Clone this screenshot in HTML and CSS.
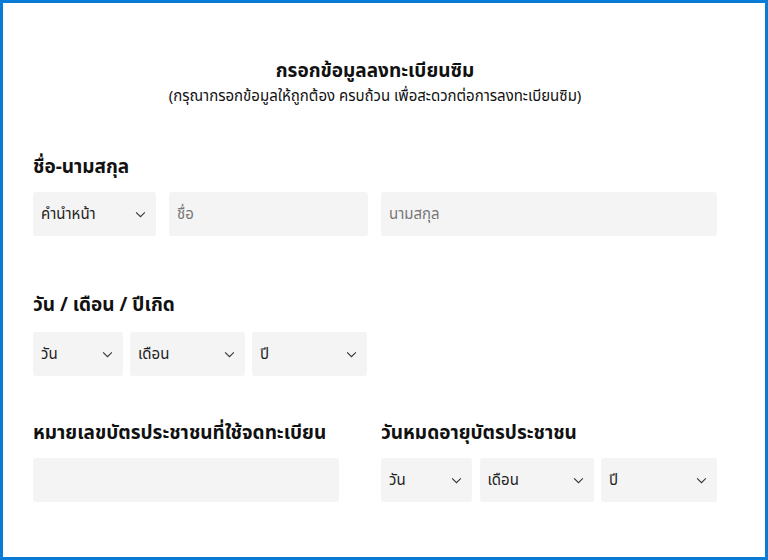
FILE: index.html
```html
<!DOCTYPE html>
<html lang="th">
<head>
<meta charset="utf-8">
<link rel="stylesheet" href="styles.css">
</head>
<body>
<div class="frame">
  <header class="head">
    <h1 class="title">กรอกข้อมูลลงทะเบียนซิม</h1>
    <p class="subtitle">(กรุณากรอกข้อมูลให้ถูกต้อง ครบถ้วน เพื่อสะดวกต่อการลงทะเบียนซิม)</p>
  </header>

  <section class="sec sec-name">
    <h2 class="label">ชื่อ-นามสกุล</h2>
    <div class="grid2">
      <div class="row">
        <div class="field sel w-prefix"><span>คำนำหน้า</span><svg class="chev" viewBox="0 0 12 8"><path d="M1 1.5l5 5 5-5" fill="none" stroke="#333" stroke-width="1.2"/></svg></div>
        <div class="field input grow"><span class="ph">ชื่อ</span></div>
      </div>
      <div class="field input"><span class="ph">นามสกุล</span></div>
    </div>
  </section>

  <section class="sec sec-birth">
    <h2 class="label">วัน / เดือน / ปีเกิด</h2>
    <div class="grid2">
      <div class="dates">
        <div class="field sel"><span>วัน</span><svg class="chev" viewBox="0 0 12 8"><path d="M1 1.5l5 5 5-5" fill="none" stroke="#333" stroke-width="1.2"/></svg></div>
        <div class="field sel"><span>เดือน</span><svg class="chev" viewBox="0 0 12 8"><path d="M1 1.5l5 5 5-5" fill="none" stroke="#333" stroke-width="1.2"/></svg></div>
        <div class="field sel"><span>ปี</span><svg class="chev" viewBox="0 0 12 8"><path d="M1 1.5l5 5 5-5" fill="none" stroke="#333" stroke-width="1.2"/></svg></div>
      </div>
    </div>
  </section>

  <section class="grid2 sec-id">
    <div class="col">
      <h2 class="label">หมายเลขบัตรประชาชนที่ใช้จดทะเบียน</h2>
      <div class="field input w-id"></div>
    </div>
    <div class="col">
      <h2 class="label">วันหมดอายุบัตรประชาชน</h2>
      <div class="dates dates-r">
        <div class="field sel"><span>วัน</span><svg class="chev" viewBox="0 0 12 8"><path d="M1 1.5l5 5 5-5" fill="none" stroke="#333" stroke-width="1.2"/></svg></div>
        <div class="field sel"><span>เดือน</span><svg class="chev" viewBox="0 0 12 8"><path d="M1 1.5l5 5 5-5" fill="none" stroke="#333" stroke-width="1.2"/></svg></div>
        <div class="field sel"><span>ปี</span><svg class="chev" viewBox="0 0 12 8"><path d="M1 1.5l5 5 5-5" fill="none" stroke="#333" stroke-width="1.2"/></svg></div>
      </div>
    </div>
  </section>
</div>
</body>
</html>
```

FILE: styles.css
```css
* { box-sizing: border-box; }
html, body { margin: 0; padding: 0; }
body {
  font-family: "Noto Sans Thai", "Noto Sans", "Liberation Sans", sans-serif;
  color: #111;
  background: #fff;
}
.frame {
  width: 768px;
  height: 560px;
  border: 3px solid #0a7bd4;
  padding: 0 48px 0 30px;
  overflow: hidden;
}
.head { text-align: center; padding-top: 57px; }
.title {
  margin: 0;
  font-size: 19px;
  line-height: 24px;
  font-weight: 700;
}
.subtitle {
  margin: 3px 0 0;
  font-size: 15px;
  line-height: 20px;
  font-weight: 400;
}
.label {
  margin: 0 0 12px;
  font-size: 19px;
  line-height: 24px;
  font-weight: 700;
}
.sec-name { margin-top: 49px; }
.sec-birth { margin-top: 58px; }
.sec-birth .label { margin-bottom: 14px; }
.sec-id { margin-top: 46px; }
.grid2 {
  display: grid;
  grid-template-columns: 335px 336px;
  column-gap: 13px;
}
.row { display: flex; gap: 13px; }
.field {
  height: 44px;
  background: #f4f4f4;
  border-radius: 3px;
  display: flex;
  align-items: center;
  padding: 0 8px;
  font-size: 15px;
  color: #222;
}
.sel { justify-content: space-between; padding-right: 10px; }
.chev { width: 11px; height: 7px; flex: none; }
.w-prefix { width: 123px; flex: none; }
.grow { flex: 1; }
.ph { color: #777; }
.dates {
  display: grid;
  grid-template-columns: 90px 115px 115px;
  column-gap: 7px;
}
.dates-r { grid-template-columns: 91px 114px 116px; column-gap: 7.5px; }
.w-id { width: 306px; }
```
